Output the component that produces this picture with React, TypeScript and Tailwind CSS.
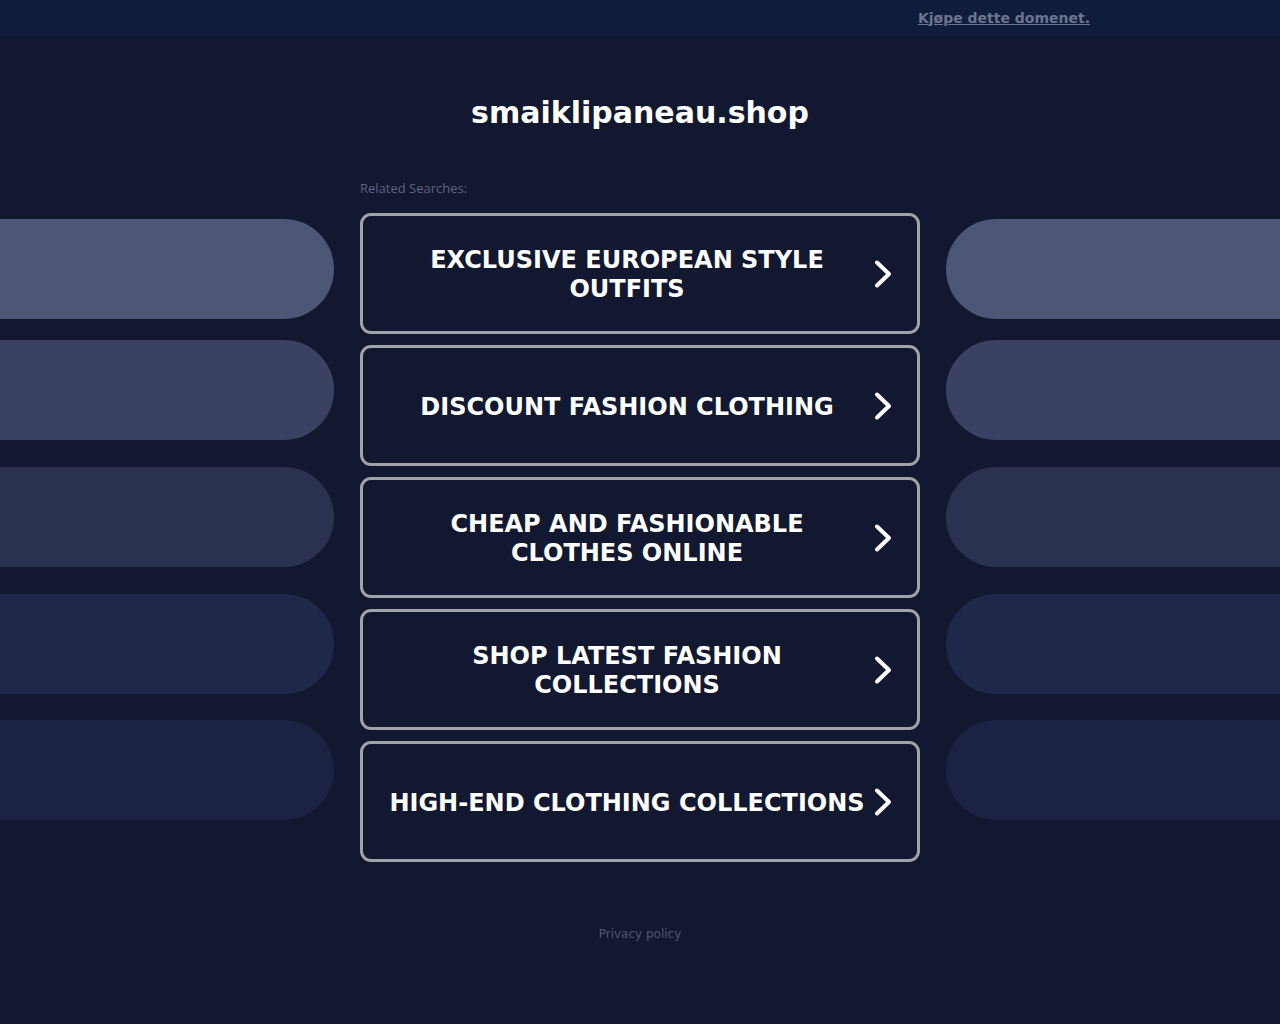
import React from "react";

const searches = [
  "Exclusive European Style Outfits",
  "Discount Fashion Clothing",
  "Cheap and Fashionable Clothes Online",
  "Shop Latest Fashion Collections",
  "High-End Clothing Collections",
];

const pills = [
  { color: "bg-[#4d5674]", gap: "mt-0" },
  { color: "bg-[#3b4261]", gap: "mt-[21px]" },
  { color: "bg-[#2a3250]", gap: "mt-[27px]" },
  { color: "bg-[#1f2849]", gap: "mt-[27px]" },
  { color: "bg-[#1b2242]", gap: "mt-[26px]" },
];

function Chevron() {
  return (
    <svg
      width="20"
      height="30"
      viewBox="0 0 20 30"
      fill="none"
      stroke="white"
      strokeWidth="4"
      strokeLinecap="round"
      strokeLinejoin="round"
      className="absolute right-[24px] top-1/2 -translate-y-1/2"
    >
      <polyline points="4,3.5 16,15 4,26.5" />
    </svg>
  );
}

function SideColumn({ side }: { side: "left" | "right" }) {
  return (
    <div className="flex flex-col pt-[39px]">
      {pills.map((p, i) => (
        <div
          key={i}
          className={`${p.color} ${p.gap} h-[100px] ${side === "left" ? "rounded-r-[50px]" : "rounded-l-[50px]"}`}
        />
      ))}
    </div>
  );
}

export default function App() {
  return (
    <div
      className="min-h-[1024px] bg-[#121830] text-white"
      style={{ fontFamily: '"DejaVu Sans", sans-serif' }}
    >
      <div className="flex h-9 items-center justify-end bg-[#111c3a] pr-[190px]">
        <a href="#" className="text-[14px] font-bold text-[#6b7590] underline">
          Kjøpe dette domenet.
        </a>
      </div>

      <h1 className="mt-[57px] text-center text-[30px] font-bold leading-10 text-white">
        smaiklipaneau.shop
      </h1>

      <div className="mt-[47px] grid grid-cols-[334px_1fr_334px] gap-[26px]">
        <SideColumn side="left" />
        <div className="flex flex-col">
          <p
            className="text-[13px] font-medium leading-4 text-[#5b6480]"
            style={{ fontFamily: '"Open Sans", sans-serif' }}
          >
            Related Searches:
          </p>
          <div className="mt-[17px] flex flex-col gap-[11px]">
            {searches.map((s) => (
              <a
                key={s}
                href="#"
                className="relative flex h-[121px] items-center rounded-[11px] border-[3px] border-[#a0a3a7] bg-[#121830]"
              >
                <span className="flex-1 pl-[25px] pr-[51px] pt-[3px] text-center text-[24px] font-bold uppercase leading-[29px] text-white">
                  {s}
                </span>
                <Chevron />
              </a>
            ))}
          </div>
        </div>
        <SideColumn side="right" />
      </div>

      <p className="mt-[62px] text-center text-[12px] leading-5 text-[#4d5670]">
        Privacy policy
      </p>
    </div>
  );
}
